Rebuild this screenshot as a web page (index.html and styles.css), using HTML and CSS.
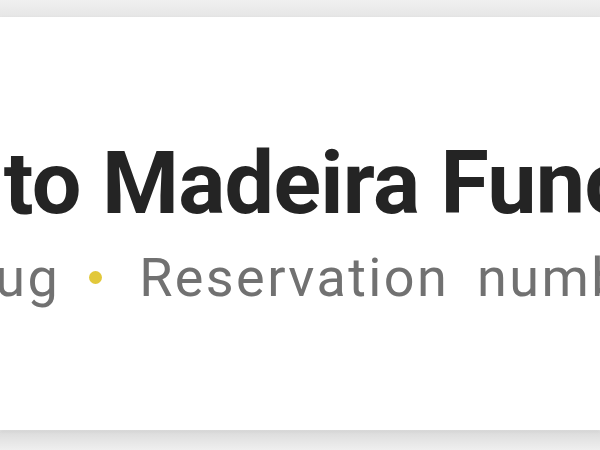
FILE: index.html
```html
<!DOCTYPE html>
<html lang="en">
<head>
    <meta charset="UTF-8">
    <meta name="viewport" content="width=device-width, initial-scale=1.0">
    <title>Booking | Transfer</title>
    <link rel="stylesheet" href="styles.css">
</head>
<body>
    <div class="page">
        <div class="booking-card">
            <div class="booking-info">
                <h1 class="booking-title">Transfer to Madeira Funchal Airport</h1>
                <p class="booking-meta">
                    <span>Fri, 16 Aug</span>
                    <span class="dot"></span>
                    <span>Reservation number 48213907</span>
                </p>
            </div>
        </div>
    </div>
</body>
</html>
```

FILE: styles.css
```css
body {
    font-family: Roboto, "Noto Sans", Arial, sans-serif;
    margin: 0;
    padding: 0;
    background-color: #ececec;
    overflow: hidden;
}

.page {
    width: 600px;
    height: 450px;
    padding: 17px 0 20px;
    box-sizing: border-box;
    background: linear-gradient(#f0f0f0, #e6e6e6 17px, #e6e6e6 430px, #dcdcdc 432px, #efefef);
}

.booking-card {
    background-color: #fff;
    height: 413px;
    overflow: hidden;
    box-shadow: 0 1px 3px rgba(0, 0, 0, 0.08);
}

.booking-info {
    padding-top: 114px;
    white-space: nowrap;
}

.booking-title {
    margin: 0 0 0 -346px;
    font-size: 88px;
    font-weight: 700;
    letter-spacing: -0.7px;
    line-height: 104px;
    color: #242424;
}

.booking-meta {
    margin: 8px 0 0 -244px;
    font-size: 54px;
    letter-spacing: 2.4px;
    word-spacing: 12px;
    line-height: 70px;
    color: #717171;
    display: flex;
    align-items: center;
}

.booking-meta span {
    flex-shrink: 0;
}

.dot {
    width: 13px;
    height: 13px;
    border-radius: 50%;
    background-color: #e2c83a;
    margin: -2px 37px 0 29px;
}
```
